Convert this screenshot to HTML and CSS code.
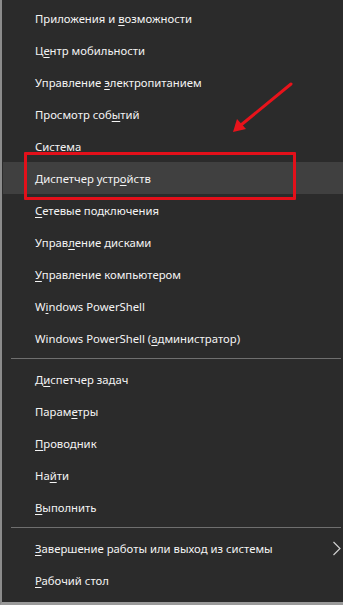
FILE: index.html
```html
<!DOCTYPE html>
<html lang="ru">
<head>
<meta charset="utf-8">
<link rel="stylesheet" href="styles.css">
</head>
<body>
<div class="menu">
  <div class="group">
    <div class="item"><span>Приложения и <u>в</u>озможности</span></div>
    <div class="item"><span>Ц<u>е</u>нтр мобильности</span></div>
    <div class="item"><span>Управление <u>э</u>лектропитанием</span></div>
    <div class="item"><span>Просмотр соб<u>ы</u>тий</span></div>
    <div class="item"><span>Систе<u>м</u>а</span></div>
    <div class="item active"><span>Диспетчер устр<u>о</u>йств</span></div>
    <div class="item"><span><u>С</u>етевые подключения</span></div>
    <div class="item"><span>Управ<u>л</u>ение дисками</span></div>
    <div class="item"><span><u>У</u>правление компьютером</span></div>
    <div class="item"><span>W<u>i</u>ndows PowerShell</span></div>
    <div class="item"><span>Windows PowerShell (<u>а</u>дминистратор)</span></div>
  </div>
  <div class="sep"></div>
  <div class="group">
    <div class="item"><span>Д<u>и</u>спетчер задач</span></div>
    <div class="item"><span>Парам<u>е</u>тры</span></div>
    <div class="item"><span><u>П</u>роводник</span></div>
    <div class="item"><span>На<u>й</u>ти</span></div>
    <div class="item"><span><u>В</u>ыполнить</span></div>
  </div>
  <div class="sep"></div>
  <div class="group">
    <div class="item sub"><span><u>З</u>авершение работы или выход из системы</span>
      <svg class="chev" width="9" height="15" viewBox="0 0 9 15"><path d="M1.5 1 L8 7.5 L1.5 14" fill="none" stroke="#cfcfcf" stroke-width="1.2"/></svg>
    </div>
    <div class="item"><span><u>Р</u>абочий стол</span></div>
  </div>

  <div class="mark"></div>
  <svg class="arrow" width="343" height="605" viewBox="0 0 343 605">
    <line x1="291" y1="84" x2="241" y2="125" stroke="#e8131b" stroke-width="3" stroke-linecap="round"/>
    <polygon points="233,132 237,119 246,129" fill="#e8131b"/>
  </svg>
</div>
</body>
</html>
```

FILE: styles.css
```css
html, body {
  margin: 0;
  padding: 0;
  background: #2b2b2b;
}
.menu {
  position: relative;
  box-sizing: border-box;
  width: 343px;
  height: 605px;
  background: #2b2b2b;
  border-left: 2px solid #8c8c8c;
  border-bottom: 3px solid #9a9a9a;
  padding-top: 2px;
  font-family: "Noto Sans", "Open Sans", sans-serif;
  font-size: 11.3px;
  color: #f4f4f4;
  overflow: hidden;
}
.group {
  display: flex;
  flex-direction: column;
}
.item {
  height: 32px;
  display: flex;
  align-items: center;
  padding-left: 33px;
  padding-right: 0;
  white-space: nowrap;
}
.item u {
  text-decoration-thickness: 1px;
  text-underline-offset: 2px;
}
.item.active {
  background: #404040;
  margin-left: 1px;
  padding-left: 32px;
}
.item.sub {
  justify-content: space-between;
}
.chev {
  display: block;
  margin-right: 2px;
}
.sep {
  height: 1px;
  background: #6f6f6f;
  margin: 4px 2px 4px 9px;
}
.mark {
  position: absolute;
  left: 22px;
  top: 152px;
  width: 272px;
  height: 48px;
  border: 3px solid #e3101a;
  border-radius: 1px;
  box-sizing: border-box;
}
.arrow {
  position: absolute;
  left: -2px;
  top: 0;
  pointer-events: none;
}
```
